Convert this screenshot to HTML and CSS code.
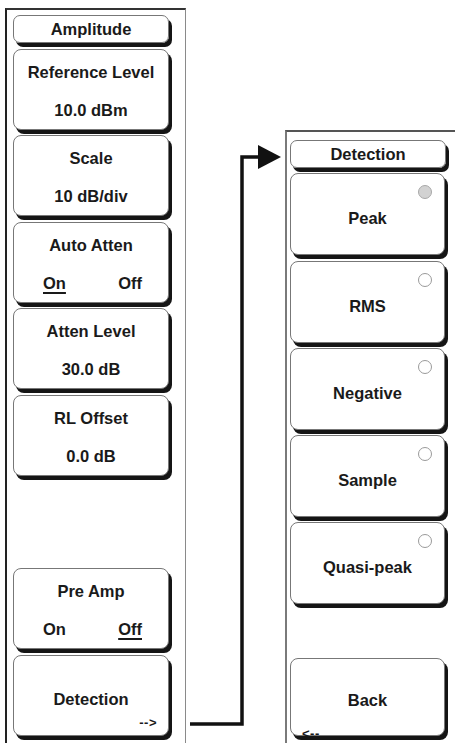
FILE: index.html
```html
<!DOCTYPE html>
<html>
<head>
	<title>Amplitude / Detection Menus</title>
	<link rel="stylesheet" href="styles.css">
</head>
<body>
	<div class="screen">
		<div class="menu menu-left">
			<div class="menu-title">Amplitude</div>
			<div class="key key-two">
				<span class="key-label">Reference Level</span>
				<span class="key-label">10.0 dBm</span>
			</div>
			<div class="key key-two">
				<span class="key-label">Scale</span>
				<span class="key-label">10 dB/div</span>
			</div>
			<div class="key key-two">
				<span class="key-label">Auto Atten</span>
				<span class="key-label toggle"><u>On</u><span>Off</span></span>
			</div>
			<div class="key key-two">
				<span class="key-label">Atten Level</span>
				<span class="key-label">30.0 dB</span>
			</div>
			<div class="key key-two">
				<span class="key-label">RL Offset</span>
				<span class="key-label">0.0 dB</span>
			</div>
			<div class="key key-empty"></div>
			<div class="key key-two">
				<span class="key-label">Pre Amp</span>
				<span class="key-label toggle"><span>On</span><u>Off</u></span>
			</div>
			<div class="key key-one">
				<span class="key-label">Detection</span>
				<span class="key-hint hint-next">--&gt;</span>
			</div>
		</div>

		<svg class="connector" width="99" height="743" viewBox="0 0 99 743">
			<polyline points="4,724 56,724 56,157 74,157" fill="none" stroke="#111" stroke-width="3.5" stroke-linejoin="miter"/>
			<polygon points="72,145 95,157 72,169" fill="#111"/>
		</svg>

		<div class="menu menu-right">
			<div class="menu-title">Detection</div>
			<div class="key key-one key-radio">
				<span class="radio radio-on"></span>
				<span class="key-label">Peak</span>
			</div>
			<div class="key key-one key-radio">
				<span class="radio"></span>
				<span class="key-label">RMS</span>
			</div>
			<div class="key key-one key-radio">
				<span class="radio"></span>
				<span class="key-label">Negative</span>
			</div>
			<div class="key key-one key-radio">
				<span class="radio"></span>
				<span class="key-label">Sample</span>
			</div>
			<div class="key key-one key-radio">
				<span class="radio"></span>
				<span class="key-label">Quasi-peak</span>
			</div>
			<div class="key key-one key-back">
				<span class="key-label">Back</span>
				<span class="key-hint hint-back">&lt;--</span>
			</div>
		</div>
	</div>
</body>
</html>
```

FILE: styles.css
```css
body {
	margin: 0;
	padding: 0;
	background-color: #fff;
	font-family: "Liberation Sans", Arial, sans-serif;
	color: #1a1a1a;
}

.screen {
	display: flex;
	align-items: flex-start;
	width: 455px;
	height: 743px;
	overflow: hidden;
}

.menu {
	display: flex;
	flex-direction: column;
	box-sizing: border-box;
	flex-shrink: 0;
}

.menu-left {
	margin: 8px 0 0 5px;
	width: 181px;
	height: 735px;
	padding: 5px 0 0 6px;
	gap: 5.6px;
	border-left: 2px solid #222;
	border-top: 2px solid #333;
	border-right: 1px solid #8a8a8a;
}

.menu-right {
	margin-top: 130px;
	flex: 1;
	height: 613px;
	padding: 8px 0 0 3px;
	gap: 5.25px;
	border-left: 2px solid #7a7a7a;
	border-top: 2px solid #555;
}

.menu-title {
	width: 156px;
	height: 28px;
	box-sizing: border-box;
	flex-shrink: 0;
	display: flex;
	align-items: center;
	justify-content: center;
	border: 1px solid #777;
	border-radius: 7px;
	box-shadow: 3px 4px 0 #151515;
	font-size: 16.5px;
	font-weight: bold;
}

.key {
	position: relative;
	width: 156px;
	height: 81px;
	box-sizing: border-box;
	flex-shrink: 0;
	display: flex;
	flex-direction: column;
	align-items: center;
	background-color: #fff;
	border: 1px solid #777;
	border-radius: 8px;
	box-shadow: 3px 4px 0 #151515;
	font-size: 16.5px;
	font-weight: bold;
}

.menu-right .key {
	width: 155px;
	height: 82px;
}

.key-label {
	line-height: 20px;
	white-space: nowrap;
}

.key-two {
	padding-top: 12px;
	gap: 18px;
}

.key-one {
	justify-content: center;
	padding-top: 8px;
}

.key-radio {
	padding-top: 8px;
}

.key-empty {
	visibility: hidden;
}

.menu-right .key-back {
	margin-top: 48px;
	height: 78px;
	padding-top: 6px;
}

.toggle {
	align-self: stretch;
	display: flex;
	justify-content: space-between;
	padding: 0 26px 0 29px;
}

.toggle u {
	text-decoration-thickness: 1.5px;
	text-underline-offset: 3px;
}

.key-hint {
	position: absolute;
	font-size: 13px;
	line-height: 15px;
	letter-spacing: 0.5px;
}

.hint-next {
	right: 11px;
	bottom: 5px;
}

.hint-back {
	left: 11px;
	bottom: -6px;
}

.radio {
	position: absolute;
	top: 11px;
	right: 12px;
	width: 14px;
	height: 14px;
	box-sizing: border-box;
	border: 1px solid #9a9a9a;
	border-radius: 50%;
	background-color: #fff;
}

.radio-on {
	background-color: #d2d2d2;
	border-color: #a8a8a8;
}

.connector {
	display: block;
	flex-shrink: 0;
}
```
